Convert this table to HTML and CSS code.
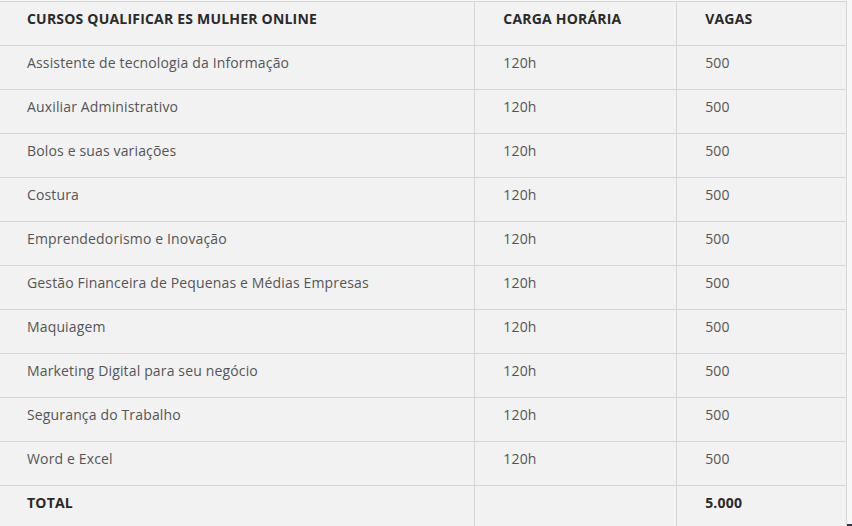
FILE: index.html
```html
<!DOCTYPE html>
<html lang="pt-BR">
<head>
<meta charset="utf-8">
<title>Cursos Qualificar ES Mulher Online</title>
<link rel="stylesheet" href="styles.css">
</head>
<body>
<div class="page">
<table class="courses">
<colgroup><col class="c1"><col class="c2"><col class="c3"></colgroup>
<thead>
<tr><th>CURSOS QUALIFICAR ES MULHER ONLINE</th><th>CARGA HORÁRIA</th><th>VAGAS</th></tr>
</thead>
<tbody>
<tr><td>Assistente de tecnologia da Informação</td><td>120h</td><td>500</td></tr>
<tr><td>Auxiliar Administrativo</td><td>120h</td><td>500</td></tr>
<tr><td>Bolos e suas variações</td><td>120h</td><td>500</td></tr>
<tr><td>Costura</td><td>120h</td><td>500</td></tr>
<tr><td>Emprendedorismo e Inovação</td><td>120h</td><td>500</td></tr>
<tr><td>Gestão Financeira de Pequenas e Médias Empresas</td><td>120h</td><td>500</td></tr>
<tr><td>Maquiagem</td><td>120h</td><td>500</td></tr>
<tr><td>Marketing Digital para seu negócio</td><td>120h</td><td>500</td></tr>
<tr><td>Segurança do Trabalho</td><td>120h</td><td>500</td></tr>
<tr><td>Word e Excel</td><td>120h</td><td>500</td></tr>
<tr class="total"><td>TOTAL</td><td></td><td>5.000</td></tr>
</tbody>
</table>
</div>
</body>
</html>
```

FILE: styles.css
```css
html, body {
  margin: 0;
  padding: 0;
}
body {
  background: #2b3a46;
  width: 852px;
  height: 526px;
  overflow: hidden;
}
.page {
  background: #f7f7f7;
  height: 524px;
  padding-top: 1px;
  box-sizing: border-box;
}
.courses {
  border-collapse: collapse;
  width: 849px;
  margin-left: -2px;
  background: #f2f2f2;
  font-family: "Open Sans", "Liberation Sans", sans-serif;
  font-size: 14px;
  line-height: 20px;
  letter-spacing: 0.15px;
  color: #555;
}
.c1 { width: 477px; }
.c2 { width: 202px; }
.c3 { width: 170px; }
.courses th,
.courses td {
  border: 1px solid #d6d6d6;
  text-align: left;
  vertical-align: top;
  padding: 7px 28px 16px 28px;
  height: 20px;
}
.courses th {
  font-weight: 700;
  letter-spacing: 0.2px;
  color: #2a2a2a;
}
.courses tr:last-child td {
  border-bottom: none;
}
.courses .total td {
  font-weight: 700;
  letter-spacing: 0.2px;
  color: #2a2a2a;
}
```
